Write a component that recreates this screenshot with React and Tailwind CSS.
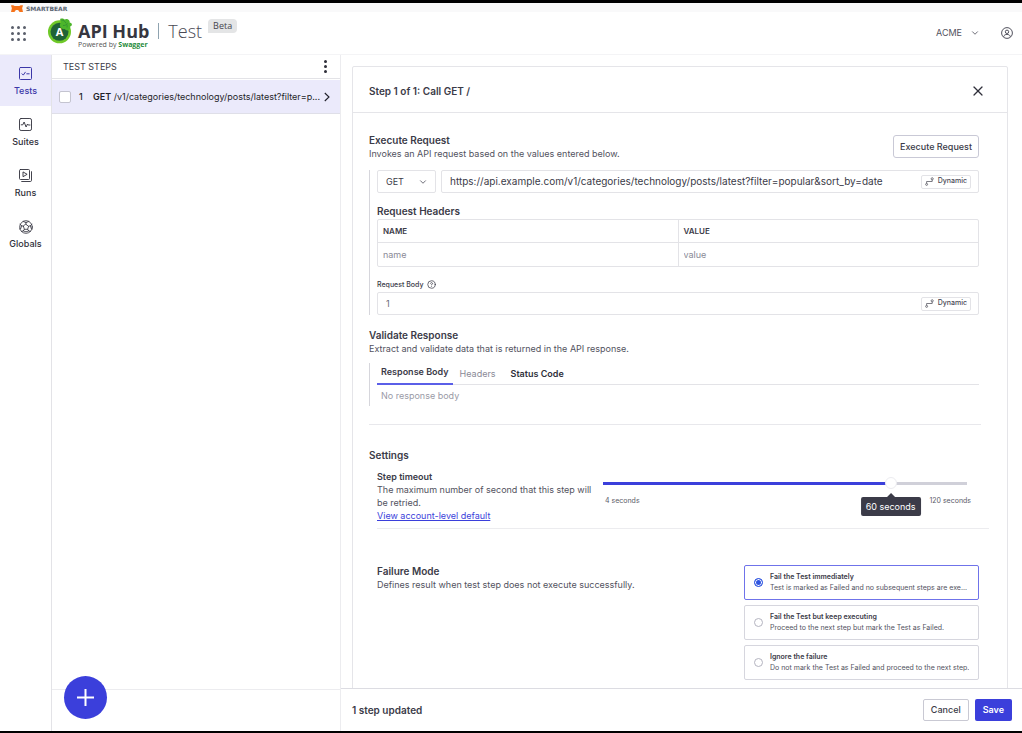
import React, { useState } from 'react';
import { ChevronDown, CircleHelp, X } from 'lucide-react';

const PATH = '/v1/categories/technology/posts/latest?filter=popular&sort_by=date';

const FAILURE_MODES = [
  { id: 'stop', title: 'Fail the Test immediately', text: 'Test is marked as Failed and no subsequent steps are exe...' },
  { id: 'continue', title: 'Fail the Test but keep executing', text: 'Proceed to the next step but mark the Test as Failed.' },
  { id: 'ignore', title: 'Ignore the failure', text: 'Do not mark the Test as Failed and proceed to the next step.' },
];

const shorten = (text, max) => (text.length > max ? `${text.slice(0, max)}...` : text);

const iconProps = {
  viewBox: '0 0 14 14',
  fill: 'none',
  stroke: 'currentColor',
  strokeLinecap: 'round',
  strokeLinejoin: 'round',
  className: 'size-[14px]',
  'aria-hidden': true,
};

const TestsIcon = () => (
  <svg {...iconProps} strokeWidth="1">
    <rect x="0.5" y="0.5" width="12" height="12" rx="1" />
    <path d="M3 6.8l1.3 1.3 2-2.9M7.8 6.8h2.4" />
  </svg>
);

const SuitesIcon = () => (
  <svg {...iconProps} strokeWidth="0.9">
    <rect x="0.5" y="0.5" width="12" height="12" rx="1.6" />
    <path d="M2.2 6.8h1.6l1.3-2.8 2 5 1.4-3 .7 1H11" />
  </svg>
);

const RunsIcon = () => (
  <svg {...iconProps} strokeWidth="0.9">
    <rect x="0.5" y="0.5" width="10" height="10" rx="1" />
    <path d="M4 3.3v4.4L7.8 5.5zM2.7 12.5h8.6a1.2 1.2 0 0 0 1.2-1.2V2.7" />
  </svg>
);

const GlobalsIcon = () => (
  <svg {...iconProps} strokeWidth="0.8">
    <circle cx="7" cy="7" r="6.3" />
    <path d="M7 4.4l2.6 1.9-1 3H5.4l-1-3zM7 4.4V2.6M9.6 6.3l1.8-.6M8.6 9.3l1.2 1.6M5.4 9.3l-1.2 1.6M4.4 6.3l-1.8-.6M4.2 1.5L7 2.6l2.8-1.1M12.9 4.2l-1.5 1.5.9 3.1 1 .1M11.4 11.4l-1.6-.5L7 11.8l-2.8-.9-1.6.5M.7 8.9l1-.1.9-3.1-1.5-1.5" />
  </svg>
);

const NAV = [
  { label: 'Tests', Icon: TestsIcon, active: true },
  { label: 'Suites', Icon: SuitesIcon },
  { label: 'Runs', Icon: RunsIcon },
  { label: 'Globals', Icon: GlobalsIcon },
];

const BearIcon = () => (
  <svg viewBox="0 0 12 7" className="h-[7px] w-3" aria-hidden="true">
    <path d="M.3 0C2 .1 2.8.5 3.8 1h4.4C9.2.5 10 .1 11.7 0c.2 1.2 0 2.2-.6 3L12 7H8.4C8 5.7 7.2 5.1 6 5.1S4 5.7 3.6 7H0l.9-4C.3 2.2.1 1.2.3 0z" fill="#f6731b" />
  </svg>
);

const SwaggerLogo = () => (
  <svg viewBox="0 0 24 26" className="h-[26px] w-6 shrink-0" aria-hidden="true">
    <circle cx="11.5" cy="13.8" r="11.5" fill="#6fc928" />
    <circle cx="11.5" cy="13.8" r="9" fill="#1f6336" />
    <path d="M12.3.8c1.7-.8 3.4-.4 4.3.8 1.4-.9 3.1-.8 4.2.3.9.9 1.1 1.9.9 2.8 1.3 0 2.2.6 2.2 1.7 0 1.1-.7 1.8-1.8 2 .5 1.7-.2 3.2-1.6 3.8-1.5.6-3 .1-3.8-1.1-1.8.3-3.6-.5-4.4-2.1C11.4 7.2 11.9 5.2 13.3 4c-1-.8-1.4-2-1-3.2z" fill="#4cb52b" />
    <path d="M13.5 2c1.9.1 3.5 1.2 4.5 3.2M15 7.5c1.6.3 3.3-.5 4.5-2.2M19 9.5c.3-1.2.2-2.3-.3-3.3" stroke="#2c8a35" strokeWidth="0.7" fill="none" />
    <text x="11.5" y="17.5" textAnchor="middle" fill="#fff" fontSize="11" fontWeight="700" fontFamily="Open Sans, sans-serif">A</text>
  </svg>
);

const DynamicIcon = () => (
  <svg viewBox="0 0 10 10" className="size-[9px]" fill="none" stroke="currentColor" strokeWidth="0.8" aria-hidden="true">
    <circle cx="1.8" cy="8.2" r="1.1" />
    <circle cx="8" cy="2" r="1.2" />
    <path d="M1.8 7V5H8V3.2" />
  </svg>
);

const UserIcon = () => (
  <svg viewBox="0 0 12 12" className="size-3" fill="none" stroke="currentColor" strokeWidth="1" aria-hidden="true">
    <circle cx="6" cy="6" r="5.4" />
    <circle cx="6" cy="4.8" r="1.7" />
    <path d="M2.6 9.8c.4-1.7 1.7-2.4 3.4-2.4s3 .7 3.4 2.4" />
  </svg>
);

const Header = () => (
  <header>
    <div className="flex h-[9px] items-end gap-[3px] overflow-hidden bg-[#f9f9fa] pl-[11px]">
      <BearIcon />
      <span className="font-['DejaVu_Sans',sans-serif] text-[6px] leading-[7px] font-bold text-[#5b6673]">SMARTBEAR</span>
    </div>
    <div className="flex h-[43px] items-center border-b border-[#f4f4f6] pr-[9px] pl-[11px]">
      <button type="button" aria-label="Apps" className="grid grid-cols-3 gap-[3px]">
        {Array.from({ length: 9 }, (_, i) => (
          <span key={i} className="size-[3px] rounded-full bg-[#5a5f6b]" />
        ))}
      </button>
      <div className="ml-[22px] flex items-start gap-[6px] font-['Open_Sans',sans-serif]">
        <SwaggerLogo />
        <div className="pt-1">
          <div className="flex items-center leading-[18px]">
            <span className="text-[18px] font-bold text-[#36363f]">API Hub</span>
            <span className="mx-[9px] h-4 w-px bg-[#8fa3b0]" />
            <span className="text-[18px] font-light text-[#4a4a55]">Test</span>
          </div>
          <p className="text-[7px] leading-[9px] text-[#555]">
            Powered by <b className="text-[#1f8b3b]">Swagger</b>
          </p>
        </div>
        <span className="mt-px rounded rounded-bl-none bg-[#e4e5e6] px-[5px] text-[9px] leading-[14px] text-[#44444c]">Beta</span>
      </div>
      <button type="button" className="ml-auto flex items-center gap-2 text-[9px] text-[#52525e]">
        ACME
        <ChevronDown size={10} strokeWidth={2} />
      </button>
      <button type="button" aria-label="Account" className="ml-[21px] text-[#52525e]">
        <UserIcon />
      </button>
    </div>
  </header>
);

const Sidebar = () => (
  <nav className="w-[52px] shrink-0 border-r border-[#e3e3e7]">
    {NAV.map(({ label, Icon, active }) => (
      <a
        key={label}
        href="#"
        className={`flex h-[51px] flex-col items-center gap-[3px] pt-3 text-[9px] leading-[13px] font-medium ${
          active ? 'bg-[#ebeafb] text-[#3b37a8]' : 'text-[#2f2f3a]'
        }`}
      >
        <Icon />
        {label}
      </a>
    ))}
  </nav>
);

const StepList = () => (
  <aside className="relative flex w-[289px] shrink-0 flex-col border-r border-[#ececef]">
    <div className="flex h-6 items-center justify-between border-b border-[#e3e3e7] pr-3 pl-[11px]">
      <h2 className="text-[9px] text-[#3b3b48]">TEST STEPS</h2>
      <button type="button" aria-label="More" className="flex flex-col gap-[2px] px-px">
        <span className="size-[3px] rounded-full bg-[#2f2f3a]" />
        <span className="size-[3px] rounded-full bg-[#2f2f3a]" />
        <span className="size-[3px] rounded-full bg-[#2f2f3a]" />
      </button>
    </div>
    <div className="mt-px flex h-[34px] items-center border-b border-[#dfdfe8] bg-[#ebeafb] pr-[10px] pl-[7px] text-[9px] text-[#1f1f29]">
      <input
        type="checkbox"
        aria-label="Select step 1"
        className="size-3 shrink-0 appearance-none rounded-[2px] border border-[#c4c4d0] bg-white checked:bg-[#3b3fdb]"
      />
      <span className="ml-2 w-[14px] shrink-0 font-medium">1</span>
      <span className="flex-1 whitespace-nowrap">
        <b className="font-semibold">GET</b> {shorten(PATH, 47)}
      </span>
      <svg viewBox="0 0 6 10" className="h-[10px] w-[6px] shrink-0" fill="none" stroke="currentColor" strokeWidth="1.1" aria-hidden="true">
        <path d="M.8 1L5 5 .8 9" />
      </svg>
    </div>
    <div className="mt-auto h-[42px] border-t border-[#ececef]" />
    <button
      type="button"
      aria-label="Add step"
      className="absolute bottom-3 left-3 flex size-[43px] items-center justify-center rounded-full bg-[#3b3fdb] text-white"
    >
      <svg viewBox="0 0 17 17" className="size-[17px]" stroke="currentColor" strokeWidth="2" aria-hidden="true">
        <path d="M8.5 0v17M0 8.5h17" />
      </svg>
    </button>
  </aside>
);

const DynamicField = ({ id, label, value, className }) => (
  <div className="flex h-[23px] min-w-0 flex-1 items-center rounded-[2px] border border-[#e3e3e7] pr-[7px] pl-2">
    <input id={id} aria-label={label} defaultValue={value} className={`min-w-0 flex-1 outline-none ${className}`} />
    <button
      type="button"
      className="flex h-[14px] items-center gap-1 rounded-[2px] border border-[#e3e3e7] px-[3px] text-[7px] font-medium text-[#4a4a55]"
    >
      <DynamicIcon />
      Dynamic
    </button>
  </div>
);

const SectionTitle = ({ title, text }) => (
  <div>
    <h3 className="text-[10px] leading-[13px] font-semibold text-[#3b3b48]">{title}</h3>
    <p className="text-[9px] leading-[13px] text-[#52525e]">{text}</p>
  </div>
);

const ExecuteRequest = () => (
  <section>
    <div className="flex items-start justify-between">
      <SectionTitle title="Execute Request" text="Invokes an API request based on the values entered below." />
      <button
        type="button"
        className="mt-px h-[23px] rounded-[3px] border border-[#c9c9d6] px-[6px] text-[9px] font-medium text-[#3b3b48]"
      >
        Execute Request
      </button>
    </div>
    <div className="mt-[10px] border-l border-[#d6d6dc] pl-[7px]">
      <div className="flex gap-[5px]">
        <div className="relative w-[59px]">
          <select
            aria-label="Method"
            defaultValue="GET"
            className="block h-[23px] w-full appearance-none rounded-[2px] border border-[#e3e3e7] pl-2 text-[9px] text-[#3b3b48]"
          >
            <option>GET</option>
            <option>POST</option>
            <option>PUT</option>
            <option>DELETE</option>
          </select>
          <ChevronDown size={10} strokeWidth={2} className="pointer-events-none absolute top-[7px] right-2 text-[#52525e]" />
        </div>
        <DynamicField label="Request URL" value={`https://api.example.com${PATH}`} className="text-[10px] text-[#3b3b48]" />
      </div>
      <h3 className="mt-3 text-[10px] leading-[13px] font-semibold text-[#3b3b48]">Request Headers</h3>
      <div className="mt-px rounded-[2px] border border-[#e3e3e7]">
        <table className="w-full table-fixed text-left text-[9px]">
          <thead>
            <tr className="h-[22px] border-b border-[#e3e3e7] text-[8px] text-[#3b3b48]">
              <th className="border-r border-[#e3e3e7] px-[5px] font-semibold">NAME</th>
              <th className="px-[5px] font-semibold">VALUE</th>
            </tr>
          </thead>
          <tbody>
            <tr className="h-6">
              <td className="border-r border-[#e3e3e7] px-[5px]">
                <input aria-label="Header name" placeholder="name" className="block w-full outline-none placeholder:text-[#8a8a96]" />
              </td>
              <td className="px-[5px]">
                <input aria-label="Header value" placeholder="value" className="block w-full outline-none placeholder:text-[#8a8a96]" />
              </td>
            </tr>
          </tbody>
        </table>
      </div>
      <label htmlFor="body" className="mt-[11px] flex items-center gap-[4px] text-[7px] leading-[13px] font-medium text-[#3b3b48]">
        Request Body
        <CircleHelp size={9} strokeWidth={2} />
      </label>
      <div className="mt-px flex">
        <DynamicField id="body" label="Request Body" value="1" className="text-[9px] text-[#6b6b78]" />
      </div>
    </div>
  </section>
);

const ValidateResponse = () => (
  <section className="mt-[14px]">
    <SectionTitle title="Validate Response" text="Extract and validate data that is returned in the API response." />
    <div className="mt-2 border-l border-[#d6d6dc] pl-[7px]">
      <div role="tablist" className="flex h-[22px] border-b border-[#e3e3e7] text-[9px]">
        <button type="button" role="tab" aria-selected="true" className="-mb-px border-b-2 border-[#5b5fe8] px-1 pb-[2px] font-semibold text-[#3b3b48]">
          Response Body
        </button>
        <button type="button" role="tab" className="px-[7px] text-[#8a8a96]">
          Headers
        </button>
        <button type="button" role="tab" className="px-2 font-semibold text-[#2f2f3a]">
          Status Code
        </button>
      </div>
      <p className="px-1 py-1 text-[9px] leading-[13px] text-[#9a9aa6]">No response body</p>
    </div>
  </section>
);

const TimeoutSlider = () => {
  const [position, setPosition] = useState(80);
  // the thumb is 12px wide, so its centre is inset at both ends
  const centre = `calc(${position}% + ${6 - position * 0.12}px)`;

  return (
    <div className="w-[364px] pt-[7px]">
      <div className="relative">
        <input
          type="range"
          aria-label="Step timeout"
          aria-valuetext="60 seconds"
          min="0"
          max="100"
          value={position}
          onChange={(e) => setPosition(Number(e.target.value))}
          className="block h-3 w-full appearance-none bg-transparent [&::-webkit-slider-runnable-track]:h-[3px] [&::-webkit-slider-runnable-track]:bg-[image:var(--track)] [&::-webkit-slider-thumb]:-mt-[5px] [&::-webkit-slider-thumb]:size-3 [&::-webkit-slider-thumb]:appearance-none [&::-webkit-slider-thumb]:rounded-full [&::-webkit-slider-thumb]:border [&::-webkit-slider-thumb]:border-[#ececf0] [&::-webkit-slider-thumb]:bg-white"
          style={{ '--track': `linear-gradient(to right, #3b3fdb ${position}%, #d0d0d9 ${position}%)` }}
        />
        <div
          className="absolute top-5 -translate-x-1/2 rounded-[2px] bg-[#3b3b48] px-[5px] text-[9px] leading-[19px] whitespace-nowrap text-white"
          style={{ left: centre }}
        >
          <span className="absolute -top-1 left-1/2 size-0 -translate-x-1/2 border-x-4 border-b-4 border-x-transparent border-b-[#3b3b48]" />
          60 seconds
        </div>
      </div>
      <div className="-mr-1 flex justify-between pt-[5px] pl-[2px] text-[7px] leading-[13px] text-[#5b5b68]">
        <span>4 seconds</span>
        <span>120 seconds</span>
      </div>
    </div>
  );
};

const Settings = () => {
  const [mode, setMode] = useState('stop');

  return (
    <section className="mt-6">
      <h3 className="text-[10px] leading-[13px] font-semibold text-[#3b3b48]">Settings</h3>
      <div className="-mr-[10px] ml-2 flex justify-between border-b border-[#ececef] pt-2 pr-[22px] pb-[6px]">
        <div className="w-[222px] text-[9px] leading-[13px] text-[#52525e]">
          <h4 className="font-semibold text-[#3b3b48]">Step timeout</h4>
          <p>The maximum number of second that this step will be retried.</p>
          <a href="#" className="text-[#3b3fdb] underline">
            View account-level default
          </a>
        </div>
        <TimeoutSlider />
      </div>
      <div className="mt-9 ml-2 flex justify-between">
        <SectionTitle title="Failure Mode" text="Defines result when test step does not execute successfully." />
        <div className="flex w-[235px] flex-col gap-[5px]">
          {FAILURE_MODES.map((item) => (
            <label
              key={item.id}
              className={`flex h-[35px] items-center gap-[7px] rounded-[2px] border pr-[3px] pb-px pl-[9px] ${
                mode === item.id ? 'border-[#6f73ea]' : 'border-[#d6d6de]'
              }`}
            >
              <input
                type="radio"
                name="failure-mode"
                checked={mode === item.id}
                onChange={() => setMode(item.id)}
                className="size-[9px] shrink-0 appearance-none rounded-full border border-[#b4b4c0] checked:border-[#2f55e0] checked:bg-[#2f55e0] checked:shadow-[inset_0_0_0_1px_white]"
              />
              <span className="min-w-0 text-[7px] leading-[11px]">
                <span className="block font-semibold text-[#3b3b48]">{item.title}</span>
                <span className="block truncate text-[#52525e]">{item.text}</span>
              </span>
            </label>
          ))}
        </div>
      </div>
    </section>
  );
};

const StepEditor = () => (
  <main className="flex min-w-0 flex-1 flex-col">
    <div className="min-h-0 flex-1 overflow-hidden pt-[11px] pr-[14px] pl-[11px]">
      <div className="rounded-[2px] border border-[#e5e5e9] pb-10">
        <div className="flex h-[46px] items-center justify-between border-b border-[#e5e5e9] pt-[3px] pr-[21px] pl-4">
          <h2 className="text-[10px] font-semibold text-[#3b3b48]">Step 1 of 1: Call GET /</h2>
          <button type="button" aria-label="Close" className="text-[#2f2f3a]">
            <X size={16} strokeWidth={1.8} />
          </button>
        </div>
        <div className="pt-[21px] pr-7 pl-4">
          <ExecuteRequest />
          <ValidateResponse />
          <hr className="-mr-[2px] mt-[18px] border-[#e8e8ec]" />
          <Settings />
        </div>
      </div>
    </div>
    <footer className="flex h-[43px] shrink-0 items-center border-t border-[#dcdce2] pr-[10px] pl-[11px] text-[9px] font-medium">
      <p className="mr-auto text-[10px] font-semibold text-[#3b3b48]">1 step updated</p>
      <button type="button" className="h-[22px] rounded-[2px] border border-[#c9c9d3] px-[7px] text-[#3b3b48]">
        Cancel
      </button>
      <button type="button" className="ml-[6px] h-[22px] rounded-[2px] bg-[#3b3fdb] px-2 font-semibold text-white">
        Save
      </button>
    </footer>
  </main>
);

export default function App() {
  return (
    <div className="flex h-screen flex-col border-t-[3px] border-b-2 border-black bg-white font-['Inter',sans-serif]">
      <Header />
      <div className="flex min-h-0 flex-1">
        <Sidebar />
        <StepList />
        <StepEditor />
      </div>
    </div>
  );
}
